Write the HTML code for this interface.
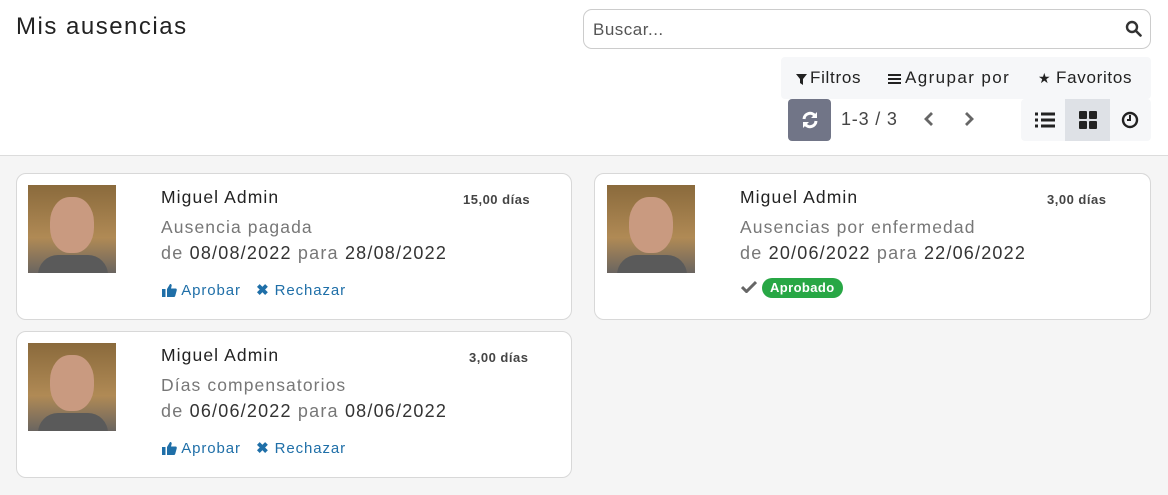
<!DOCTYPE html>
<html><head><meta charset="utf-8"><style>
*{box-sizing:border-box;margin:0;padding:0}
body{width:1168px;height:495px;overflow:hidden;font-family:"Liberation Sans",sans-serif;background:#f5f5f5;color:#222;position:relative}
.hdr{position:absolute;left:0;top:0;width:1168px;height:156px;background:#fff;border-bottom:1px solid #dcdcdc}
.title{position:absolute;left:16px;top:13px;font-size:24px;color:#222;letter-spacing:1.5px}
.search{position:absolute;left:583px;top:9px;width:568px;height:40px;border:1px solid #ccc;border-radius:9px}
.search span{position:absolute;left:9px;top:10px;font-size:17px;color:#555;letter-spacing:0.5px}
.fbar{position:absolute;left:781px;top:57px;width:370px;height:42px;background:#f6f7f9;border-radius:4px;font-size:17px;color:#222;letter-spacing:0.7px}
.fbar span{position:absolute;top:11px;white-space:nowrap}
.ref{position:absolute;left:788px;top:99px;width:43px;height:42px;background:#717587;border-radius:4px}
.pg{position:absolute;left:841px;top:109px;font-size:18px;color:#444;letter-spacing:0.8px}
.vw{position:absolute;left:1021px;top:99px;width:130px;height:42px;background:#f6f7f9;border-radius:4px}
.vw .a{position:absolute;left:44px;top:0;width:45px;height:42px;background:#dee1e6}
.card{position:absolute;background:#fff;border:1px solid #d8d8d8;border-radius:10px}
.ph{position:absolute;left:11px;top:11px;width:88px;height:88px;background:linear-gradient(#8a6a3c,#b08a55 60%,#6a6560);overflow:hidden}
.nm{position:absolute;left:144px;top:13px;font-size:17.5px;color:#222;letter-spacing:1.1px;white-space:nowrap}
.dy{position:absolute;top:18px;font-size:13px;font-weight:bold;color:#444;letter-spacing:0.5px}
.ty{position:absolute;left:144px;top:43px;font-size:17.5px;color:#777;letter-spacing:1.1px;white-space:nowrap}
.dt{position:absolute;left:144px;top:69px;font-size:18px;color:#333;letter-spacing:1.2px;white-space:nowrap}
.dt i{font-style:normal;color:#777}
.ac{position:absolute;left:145px;top:107px;font-size:15px;color:#1f6fa8;letter-spacing:0.9px;white-space:nowrap}
.ac svg{vertical-align:-2px}
</style></head><body>
<div class="hdr">
<div class="title">Mis ausencias</div>
<div class="search"><span>Buscar...</span>
<svg style="position:absolute;right:8px;top:10px" width="17" height="17" viewBox="0 0 17 17"><circle cx="7" cy="7" r="5" fill="none" stroke="#333" stroke-width="2.4"/><path d="M11 11l4.5 4.5" stroke="#333" stroke-width="2.6" stroke-linecap="round"/></svg></div>
<div class="fbar">
<svg style="position:absolute;left:15px;top:17px" width="11" height="11" viewBox="0 0 11 11"><path d="M0 0h11L7 5v6L4 9V5z" fill="#222"/></svg>
<span style="left:29px">Filtros</span>
<svg style="position:absolute;left:107px;top:17px" width="13" height="10" viewBox="0 0 13 10"><path d="M0 1h13M0 5h13M0 9h13" stroke="#222" stroke-width="2"/></svg>
<span style="left:124px;letter-spacing:1.4px">Agrupar por</span>
<span style="left:257px;font-size:14px;top:13px">★</span>
<span style="left:275px">Favoritos</span></div>
<div class="ref"><svg style="position:absolute;left:13px;top:12px" width="18" height="18" viewBox="0 0 18 18"><path d="M3 8a6 6 0 0 1 11-3M15 10a6 6 0 0 1-11 3" fill="none" stroke="#fff" stroke-width="3"/><path d="M16 1v6h-6zM2 17v-6h6z" fill="#fff"/></svg></div>
<div class="pg">1-3 / 3</div>
<svg style="position:absolute;left:921px;top:111px" width="60" height="16" viewBox="0 0 60 16"><path d="M11 2L5 8l6 6M45 2l6 6-6 6" fill="none" stroke="#666" stroke-width="2.8"/></svg>
<div class="vw"><div class="a"></div>
<svg style="position:absolute;left:14px;top:13px" width="20" height="16" viewBox="0 0 20 16"><path d="M0 2h3M6 2h14M0 8h3M6 8h14M0 14h3M6 14h14" stroke="#222" stroke-width="3"/></svg>
<svg style="position:absolute;left:58px;top:12px" width="18" height="18" viewBox="0 0 18 18"><rect x="0" y="0" width="8" height="8" rx="1" fill="#222"/><rect x="10" y="0" width="8" height="8" rx="1" fill="#222"/><rect x="0" y="10" width="8" height="8" rx="1" fill="#222"/><rect x="10" y="10" width="8" height="8" rx="1" fill="#222"/></svg>
<svg style="position:absolute;left:100px;top:12px" width="18" height="18" viewBox="0 0 18 18"><circle cx="9" cy="9" r="7" fill="none" stroke="#222" stroke-width="2.4"/><path d="M9 4v5H6" fill="none" stroke="#222" stroke-width="2"/></svg>
</div>
</div>

<div class="card" style="left:16px;top:173px;width:556px;height:147px">
<div class="ph"><div style="position:absolute;left:22px;top:12px;width:44px;height:56px;border-radius:45%;background:#c99a80"></div><div style="position:absolute;left:10px;top:70px;width:70px;height:30px;border-radius:20px 20px 0 0;background:#5a5a5a"></div></div>
<div class="nm">Miguel Admin</div><div class="dy" style="left:446px">15,00 días</div>
<div class="ty">Ausencia pagada</div>
<div class="dt"><i>de</i> 08/08/2022 <i>para</i> 28/08/2022</div>
<div class="ac"><svg width="15" height="14" viewBox="0 0 15 14"><rect x="0" y="6" width="3.5" height="8" fill="#1f6fa8"/><path d="M5 6l3-5c1.5 0 2 1 1.5 2.5L9 5.5h4.5c1.2 0 1.5 1 1.2 2l-1.5 5.5c-.3.8-.8 1-1.5 1H5z" fill="#1f6fa8"/></svg> Aprobar &nbsp; <b>✖</b> Rechazar</div>
</div>

<div class="card" style="left:594px;top:173px;width:557px;height:147px">
<div class="ph" style="left:12px"><div style="position:absolute;left:22px;top:12px;width:44px;height:56px;border-radius:45%;background:#c99a80"></div><div style="position:absolute;left:10px;top:70px;width:70px;height:30px;border-radius:20px 20px 0 0;background:#5a5a5a"></div></div>
<div class="nm" style="left:145px">Miguel Admin</div><div class="dy" style="left:452px">3,00 días</div>
<div class="ty" style="left:145px">Ausencias por enfermedad</div>
<div class="dt" style="left:145px"><i>de</i> 20/06/2022 <i>para</i> 22/06/2022</div>
<svg style="position:absolute;left:146px;top:106px" width="16" height="13" viewBox="0 0 16 13"><path d="M1 7l4.5 4.5L15 2" fill="none" stroke="#666" stroke-width="3"/></svg>
<div style="position:absolute;left:167px;top:104px;height:20px;padding:0 8px;background:#28a745;color:#fff;border-radius:10px;font-size:13px;font-weight:bold;line-height:20px;letter-spacing:0.4px">Aprobado</div>
</div>

<div class="card" style="left:16px;top:331px;width:556px;height:147px">
<div class="ph"><div style="position:absolute;left:22px;top:12px;width:44px;height:56px;border-radius:45%;background:#c99a80"></div><div style="position:absolute;left:10px;top:70px;width:70px;height:30px;border-radius:20px 20px 0 0;background:#5a5a5a"></div></div>
<div class="nm">Miguel Admin</div><div class="dy" style="left:452px">3,00 días</div>
<div class="ty">Días compensatorios</div>
<div class="dt"><i>de</i> 06/06/2022 <i>para</i> 08/06/2022</div>
<div class="ac"><svg width="15" height="14" viewBox="0 0 15 14"><rect x="0" y="6" width="3.5" height="8" fill="#1f6fa8"/><path d="M5 6l3-5c1.5 0 2 1 1.5 2.5L9 5.5h4.5c1.2 0 1.5 1 1.2 2l-1.5 5.5c-.3.8-.8 1-1.5 1H5z" fill="#1f6fa8"/></svg> Aprobar &nbsp; <b>✖</b> Rechazar</div>
</div>
</body></html>
